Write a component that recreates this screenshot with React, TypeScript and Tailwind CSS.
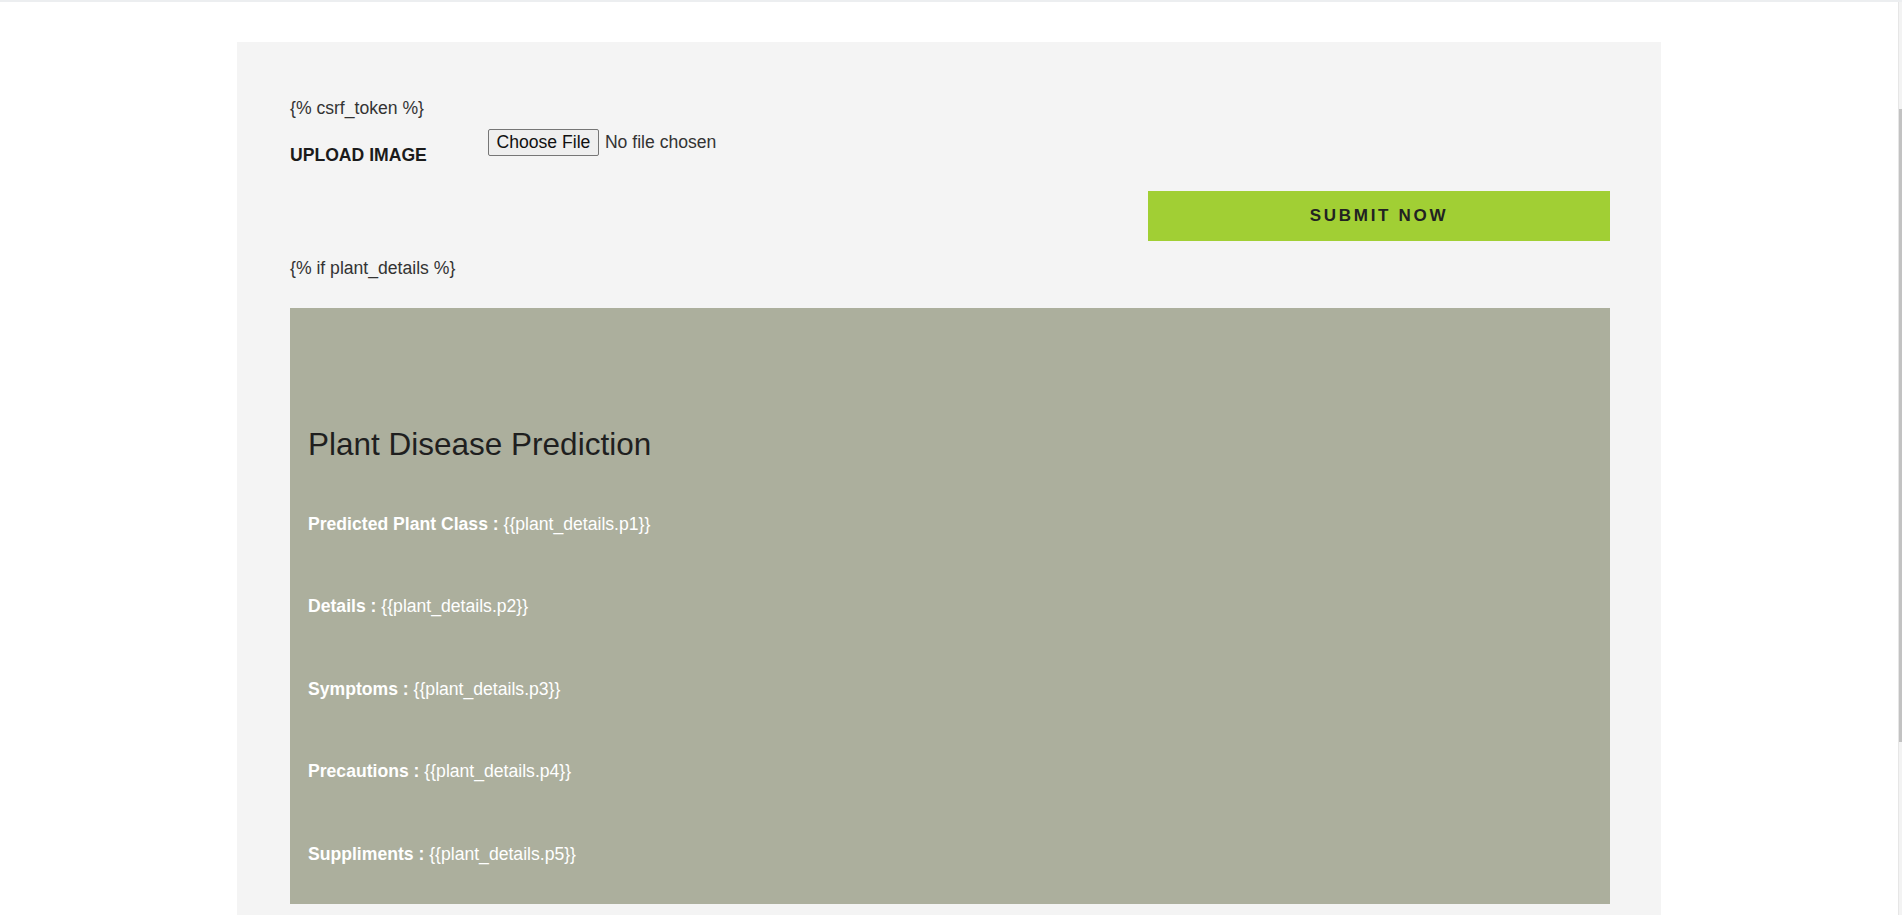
import React from 'react';

const details = [
  { label: 'Predicted Plant Class', key: 'p1' },
  { label: 'Details', key: 'p2' },
  { label: 'Symptoms', key: 'p3' },
  { label: 'Precautions', key: 'p4' },
  { label: 'Suppliments', key: 'p5' },
];

export default function App() {
  return (
    <div className="flex h-[915px] flex-col overflow-hidden bg-white font-['Liberation_Sans',Arial,sans-serif] text-[17.6px] text-[#333]">
      {/* top rule */}
      <div className="h-[2px] shrink-0 bg-[#eceef0]" />

      <div className="flex min-h-0 flex-1">
        <main className="flex-1 pt-[40px]">
          <section className="mx-auto w-[1424px] bg-[#f4f4f4] pb-[60px] pl-[53px] pr-[51px] pt-[53px]">
            <p className="leading-[26px]">{'{% csrf_token %}'}</p>

            {/* upload row */}
            <div className="mt-[8px] flex items-start">
              <div className="mt-[13px] w-[198px] shrink-0 font-bold leading-[26px] text-[#1b1b1b]">UPLOAD IMAGE</div>
              <label className="flex h-[27px] cursor-pointer items-center">
                <input type="file" className="hidden" />
                <span className="flex h-[27px] items-center rounded-[2px] border border-[#767676] bg-[#efefef] px-[7.5px] text-[#111]">
                  Choose File
                </span>
                <span className="ml-[6px] text-[#333]">No file chosen</span>
              </label>
            </div>

            <div className="mt-[23px] flex justify-end">
              <button className="h-[50px] w-[462px] bg-[#a1cf34] text-[17px] font-bold tracking-[2.7px] text-[#222]">
                SUBMIT NOW
              </button>
            </div>

            <p className="mt-[14px] leading-[26px]">{'{% if plant_details %}'}</p>

            {/* result card */}
            <div className="mt-[27px] bg-[#acaf9d] pb-[37px] pl-[18px] pt-[117px]">
              <h2 className="text-[31.5px] leading-[38px] text-[#1f1f1f]">Plant Disease Prediction</h2>
              <div className="mt-[47.5px] flex flex-col gap-[56.5px] text-white">
                {details.map((d) => (
                  <p key={d.key} className="leading-[26px]">
                    <b>{d.label} : </b>
                    {`{{plant_details.${d.key}}}`}
                  </p>
                ))}
              </div>
            </div>
          </section>
        </main>

        {/* scrollbar */}
        <div className="w-[4px] shrink-0 border-l border-[#e6e6e6] bg-[#f3f3f3]">
          <div className="ml-auto mt-[107px] h-[633px] w-[3px] bg-[#c2c2c2]" />
        </div>
      </div>
    </div>
  );
}
